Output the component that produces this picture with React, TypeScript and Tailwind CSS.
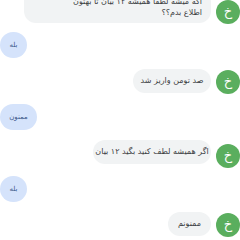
import React from "react";

const font = { fontFamily: '"DejaVu Sans", "Noto Sans", sans-serif' };

function Avatar({ className = "" }: { className?: string }) {
  return (
    <div
      className={`w-[24px] h-[24px] rounded-full bg-[#5aae5e] text-white flex items-center justify-center text-[13px] leading-none pb-[2px] shrink-0 ${className}`}
    >
      خ
    </div>
  );
}

function Gray({ text, w, className = "" }: { text: string; w: string; className?: string }) {
  return (
    <div
      dir="rtl"
      className={`h-[24px] rounded-full bg-[#f1f3f4] text-[#3c4043] text-[8px] flex items-center justify-center ${w} ${className}`}
    >
      {text}
    </div>
  );
}

function Blue({ text, w }: { text: string; w: string }) {
  return (
    <div
      dir="rtl"
      className={`h-[26px] rounded-full bg-[#d5e3fb] text-[#3f5b8c] text-[7px] flex items-center justify-center ${w}`}
    >
      {text}
    </div>
  );
}

export default function App() {
  return (
    <div className="w-[240px] h-[240px] bg-white overflow-hidden flex flex-col justify-end pb-[3px]" style={font}>
      <div className="flex justify-end items-end gap-[5px]">
        <div
          dir="rtl"
          className="w-[187px] rounded-[12px] bg-[#f1f3f4] text-[#3c4043] text-[8px] leading-[11px] pt-[6px] pb-[5px] pr-[9px] pl-[10px]"
        >
          <div>اگه میشه لطفا همیشه ۱۲ بیان تا بهتون</div>
          <div>اطلاع بدم؟؟</div>
        </div>
        <Avatar className="mb-[-1px]" />
      </div>
      <div className="flex mt-[9px]">
        <Blue text="بله" w="w-[27px]" />
      </div>
      <div className="flex justify-end items-start gap-[5px] mt-[11px]">
        <Gray text="صد تومن واریز شد" w="w-[78px]" />
        <Avatar className="mt-[1px]" />
      </div>
      <div className="flex mt-[10px]">
        <Blue text="ممنون" w="w-[37px]" />
      </div>
      <div className="flex justify-end items-start gap-[5px] mt-[10px]">
        <Gray text="اگر همیشه لطف کنید بگید ۱۲ بیان" w="w-[118px]" />
        <Avatar className="mt-[4px]" />
      </div>
      <div className="flex mt-[8px]">
        <Blue text="بله" w="w-[27px]" />
      </div>
      <div className="flex justify-end items-start gap-[5px] mt-[10px]">
        <Gray text="ممنونم" w="w-[43px]" />
        <Avatar className="mt-[1px]" />
      </div>
    </div>
  );
}
